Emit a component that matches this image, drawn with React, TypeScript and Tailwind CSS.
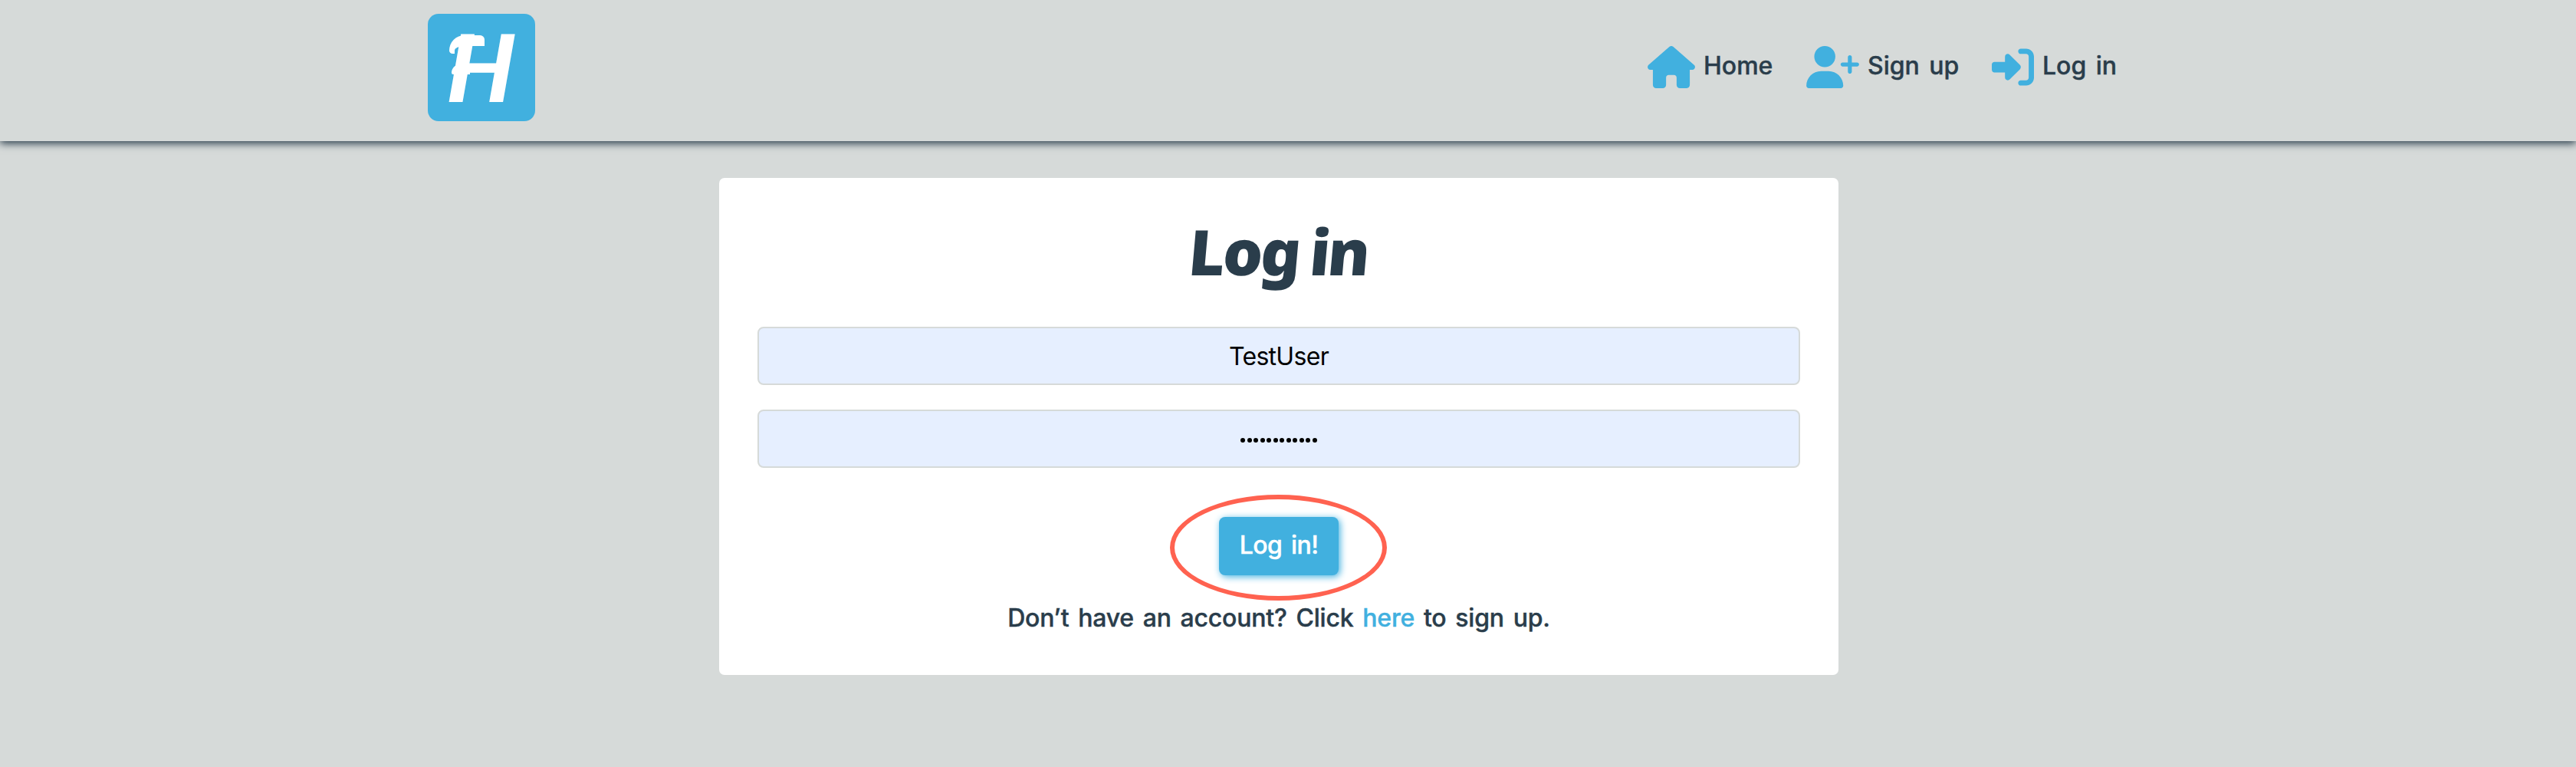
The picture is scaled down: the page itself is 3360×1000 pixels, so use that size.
import { FaHouse, FaUserPlus, FaRightToBracket } from "react-icons/fa6";

function Logo() {
  return (
    <a href="#" aria-label="Home page" className="relative mt-[18px] flex h-[140px] w-[140px] items-center justify-center rounded-[14px] bg-[#41b0df] text-white">
      <span className="-mt-[4px] -skew-x-3 font-['Lato'] text-[122px] leading-none font-black italic">H</span>
      <span className="absolute top-[28px] left-[28px] h-[24px] w-[46px] rounded-tl-[28px] rounded-tr-[8px] rounded-bl-[6px] border-t-[14px] border-l-[7px] border-white" />
      <span className="absolute top-[66px] left-[31px] h-[13px] w-[24px] rounded-tl-[20px] rounded-bl-[4px] bg-white" />
    </a>
  );
}

export default function App() {
  return (
    <div className="h-[1000px] w-[3360px] bg-[#d6dad9] font-['Inter',sans-serif] text-[32px] font-medium text-[#2a3d4b]">
      <header className="flex h-[184px] items-start justify-between pr-[596px] pl-[558px] shadow-[0_3px_10px_#2a3d4b]">
        <Logo />
        <nav className="flex h-[92px] items-center pt-[83px] leading-none whitespace-nowrap [-webkit-text-stroke:0.4px]">
          <a href="#" className="flex w-[207px] items-center">
            <FaHouse className="h-[55px] w-[62px] text-[#41b0df]" />
            <span className="ml-[11px] -mt-[3px]">Home</span>
          </a>
          <a href="#" className="flex w-[242px] items-center">
            <FaUserPlus className="h-[55px] w-[69px] text-[#41b0df]" />
            <span className="ml-[11px] -mt-[3px] [word-spacing:4px]">Sign up</span>
          </a>
          <a href="#" className="flex w-[166px] items-center">
            <FaRightToBracket className="h-[55px] w-[55px] text-[#41b0df]" />
            <span className="ml-[11px] -mt-[3px] [word-spacing:4px]">Log in</span>
          </a>
        </nav>
      </header>

      <main className="mt-[48px] ml-[938px] flex h-[648px] w-[1460px] flex-col items-center rounded-[7px] bg-white px-[50px]">
        <h1 className="mt-[50px] h-[90px] -skew-x-5 font-['Noto_Sans'] text-[82px] leading-[90px] font-black tracking-[-3px] [word-spacing:-4px]">Log in</h1>
        <form className="mt-[54px] flex w-full flex-col items-center">
          <input
            type="text"
            defaultValue="TestUser"
            className="h-[76px] w-full rounded-[8px] border-2 border-[#d6dad9] bg-[#e6efff] text-center font-normal tracking-[-0.7px] text-black"
          />
          <div className="mt-[32px] flex h-[76px] w-full items-center justify-center gap-[2.5px] rounded-[8px] border-2 border-[#d6dad9] bg-[#e6efff] pt-[3px]">
            {Array.from({ length: 12 }, (_, i) => (
              <span key={i} className="h-[6px] w-[6px] rounded-full bg-black" />
            ))}
          </div>
          <div className="relative mt-[64px]">
            <button type="button" className="h-[76px] w-[156px] rounded-[8px] bg-[#41b0df] pb-[2px] tracking-[-0.6px] text-white shadow-[2px_2px_10px_#41b0df] [-webkit-text-stroke:0.4px] [word-spacing:4px]">
              Log in!
            </button>
            <span className="absolute -top-[29px] -left-[64px] h-[138px] w-[283px] rounded-[50%] border-[6px] border-[#ff6250]" />
          </div>
        </form>
        <p className="mt-[36px] leading-[40px] tracking-[-0.2px] whitespace-nowrap [-webkit-text-stroke:0.4px] [word-spacing:3.5px]">
          Don’t have an account? Click <a href="#" className="text-[#41b0df]">here</a> to sign up.
        </p>
      </main>
    </div>
  );
}
